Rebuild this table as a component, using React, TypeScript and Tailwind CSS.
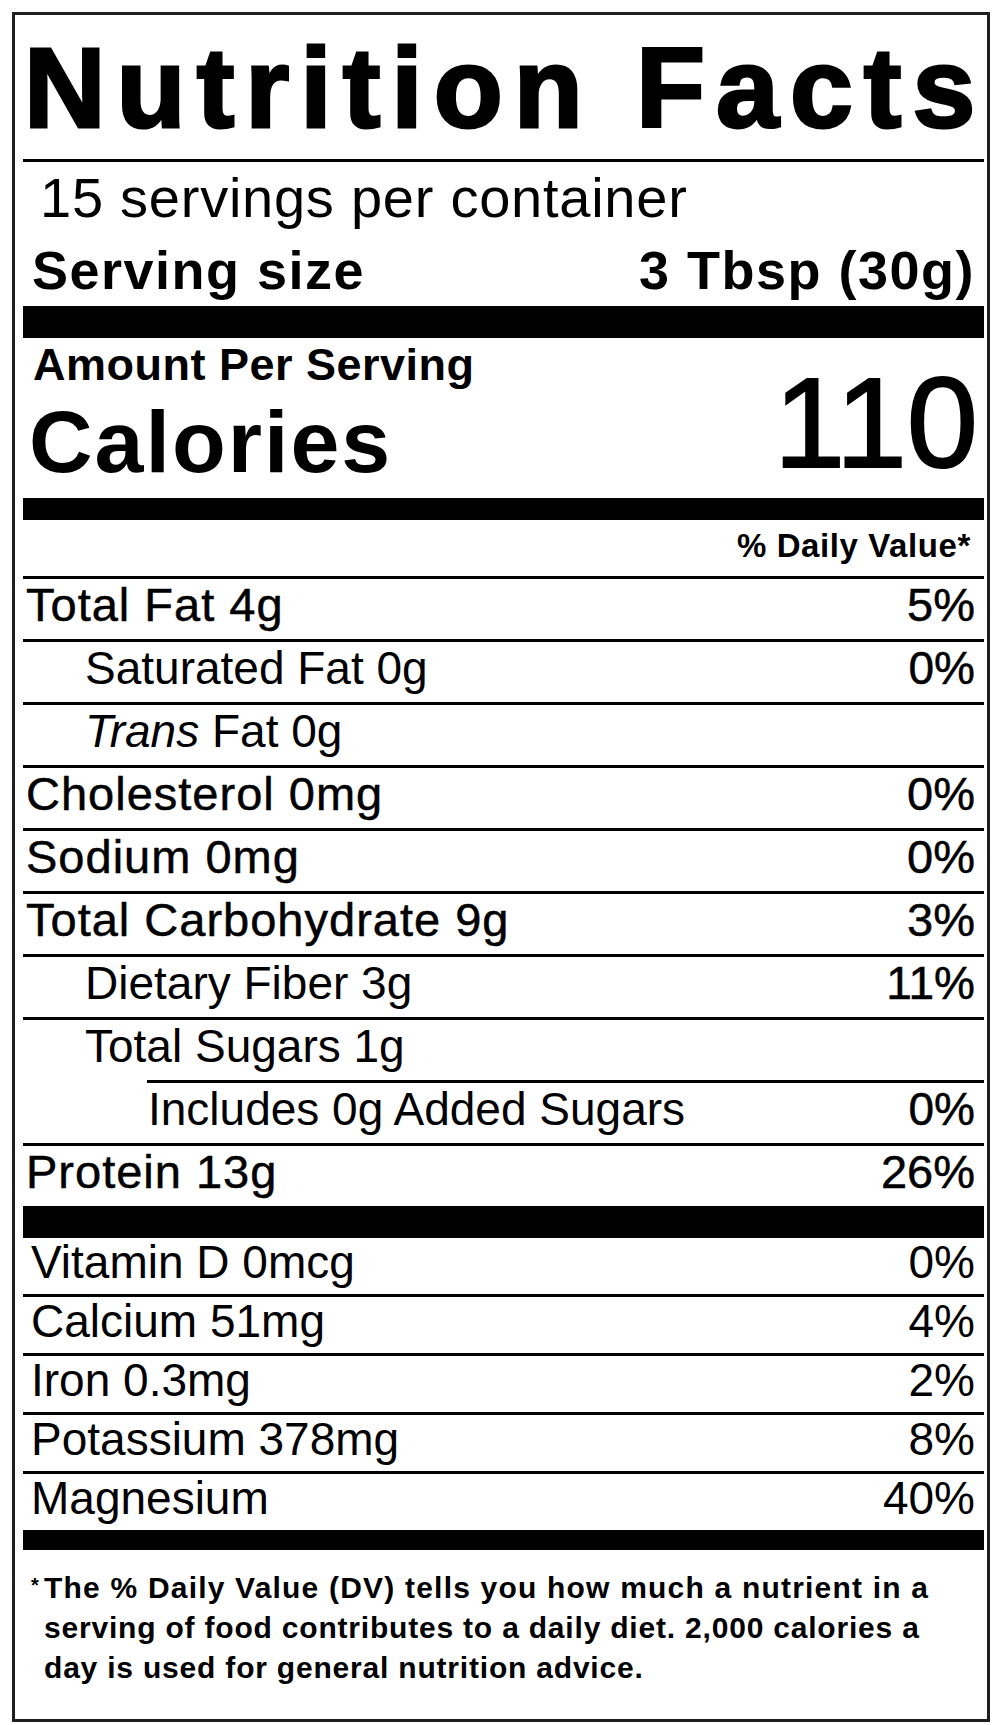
import type { ReactNode } from "react";

type Nutrient = {
  label: ReactNode;
  dv?: string;
  main?: boolean;
  pad: string;
  line?: string;
};

const nutrients: Nutrient[] = [
  { label: "Total Fat 4g", dv: "5%", main: true, pad: "pl-[3px]" },
  { label: "Saturated Fat 0g", dv: "0%", pad: "pl-[62px]" },
  {
    label: (
      <>
        <i>Trans</i> Fat 0g
      </>
    ),
    pad: "pl-[62px]",
  },
  { label: "Cholesterol 0mg", dv: "0%", main: true, pad: "pl-[3px]" },
  { label: "Sodium 0mg", dv: "0%", main: true, pad: "pl-[3px]" },
  { label: "Total Carbohydrate 9g", dv: "3%", main: true, pad: "pl-[3px]" },
  { label: "Dietary Fiber 3g", dv: "11%", pad: "pl-[62px]" },
  { label: "Total Sugars 1g", pad: "pl-[62px]" },
  { label: "Includes 0g Added Sugars", dv: "0%", pad: "pl-[125px]", line: "ml-[124px]" },
  { label: "Protein 13g", dv: "26%", main: true, pad: "pl-[3px]" },
];

const vitamins = [
  { label: "Vitamin D 0mcg", dv: "0%" },
  { label: "Calcium 51mg", dv: "4%" },
  { label: "Iron 0.3mg", dv: "2%" },
  { label: "Potassium 378mg", dv: "8%" },
  { label: "Magnesium", dv: "40%" },
];

function NutrientRow({ n }: { n: Nutrient }) {
  return (
    <>
      <div className={`h-[3px] bg-black ${n.line ?? ""}`} />
      <div
        className={`flex h-[60px] items-center justify-between pb-[9px] pr-[9px] leading-none ${n.pad} ${
          n.main ? "text-[47px] tracking-[1px]" : "text-[46px]"
        }`}
      >
        <span className={n.main ? "[-webkit-text-stroke:0.5px_black]" : ""}>{n.label}</span>
        <span className="tracking-normal [-webkit-text-stroke:0.5px_black]">{n.dv}</span>
      </div>
    </>
  );
}

export default function App() {
  return (
    <div className="min-h-[1725px] bg-white pl-[12px] pt-[12px] font-['Liberation_Sans',Arial,sans-serif] text-black">
      <div className="flex h-[1710px] w-[978px] flex-col border-[3px] border-[#1f1f1f] pl-[8px] pr-[3px]">
        <div className="h-[144px] pl-[1px] pt-[17px] text-[113px] font-bold leading-none tracking-[11px] whitespace-nowrap [-webkit-text-stroke:3px_black]">
          Nutrition Facts
        </div>
        <div className="h-[3px] bg-black" />

        <div className="mt-[8px] pl-[17px] text-[56px] leading-none tracking-[0.75px]">15 servings per container</div>
        <div className="mt-[17px] flex justify-between pl-[9px] pr-[9px] text-[54px] font-bold leading-none tracking-[1.5px]">
          <span>Serving size</span>
          <span>3 Tbsp (30g)</span>
        </div>

        <div className="mt-[9px] h-[32px] bg-black" />

        <div className="mt-[4px] flex items-start justify-between">
          <div className="flex flex-col">
            <div className="pl-[10px] text-[45px] font-bold leading-none tracking-[0.5px]">Amount Per Serving</div>
            <div className="mt-[11px] pl-[6px] text-[88px] font-bold leading-none tracking-[2px]">Calories</div>
          </div>
          <div className="mt-[17px] pr-[6px] text-[128px] leading-none [-webkit-text-stroke:2px_black]">110</div>
        </div>

        <div className="mt-[11px] h-[22px] bg-black" />

        <div className="mt-[9px] pr-[13px] text-right text-[33px] font-bold leading-none tracking-[0.6px]">
          % Daily Value*
        </div>

        <div className="mt-[14px] flex flex-col">
          {nutrients.map((n, i) => (
            <NutrientRow key={i} n={n} />
          ))}
        </div>

        <div className="h-[32px] bg-black" />

        <div className="flex flex-col">
          {vitamins.map((v, i) => (
            <div key={v.label}>
              {i > 0 && <div className="h-[3px] bg-black" />}
              <div className="flex h-[56px] items-center justify-between pb-[8px] pl-[8px] pr-[9px] text-[46px] leading-none">
                <span>{v.label}</span>
                <span>{v.dv}</span>
              </div>
            </div>
          ))}
        </div>

        <div className="h-[20px] bg-black" />

        <div className="mt-[15px] pl-[21px] text-[30px] font-bold leading-[40px] tracking-[0.8px]">
          <div className="whitespace-nowrap tracking-[1.2px]">
            <span className="-ml-[13px] inline-block w-[13px] align-[6px] text-[20px]">*</span>
            The % Daily Value (DV) tells you how much a nutrient in a
          </div>
          <div className="whitespace-nowrap">serving of food contributes to a daily diet. 2,000 calories a</div>
          <div className="whitespace-nowrap">day is used for general nutrition advice.</div>
        </div>
      </div>
    </div>
  );
}
